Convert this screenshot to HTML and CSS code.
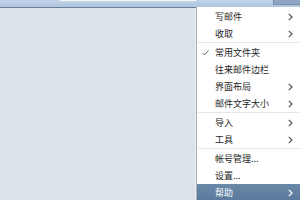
FILE: index.html
```html
<!DOCTYPE html>
<html>
<head>
<meta charset="utf-8">
<link rel="stylesheet" href="styles.css">
</head>
<body>
<div class="page">
  <div class="topbar">
    <div class="search"></div>
    <div class="btn"></div>
  </div>
  <div class="content">
    <div class="main"></div>
    <div class="menu">
      <div class="item"><span class="label">写邮件</span><svg class="arrow" width="5" height="8" viewBox="0 0 5 8"><polyline points="0.8,0.8 4,4 0.8,7.2" fill="none" stroke="currentColor" stroke-width="1.2"/></svg></div>
      <div class="item"><span class="label">收取</span><svg class="arrow" width="5" height="8" viewBox="0 0 5 8"><polyline points="0.8,0.8 4,4 0.8,7.2" fill="none" stroke="currentColor" stroke-width="1.2"/></svg></div>
      <div class="sep"></div>
      <div class="item"><svg class="check" width="7" height="6" viewBox="0 0 7 6"><polyline points="0.5,3 2.5,5 6.5,0.5" fill="none" stroke="currentColor" stroke-width="1"/></svg><span class="label">常用文件夹</span></div>
      <div class="item"><span class="label">往来邮件边栏</span></div>
      <div class="item"><span class="label">界面布局</span><svg class="arrow" width="5" height="8" viewBox="0 0 5 8"><polyline points="0.8,0.8 4,4 0.8,7.2" fill="none" stroke="currentColor" stroke-width="1.2"/></svg></div>
      <div class="item"><span class="label">邮件文字大小</span><svg class="arrow" width="5" height="8" viewBox="0 0 5 8"><polyline points="0.8,0.8 4,4 0.8,7.2" fill="none" stroke="currentColor" stroke-width="1.2"/></svg></div>
      <div class="sep"></div>
      <div class="item"><span class="label">导入</span><svg class="arrow" width="5" height="8" viewBox="0 0 5 8"><polyline points="0.8,0.8 4,4 0.8,7.2" fill="none" stroke="currentColor" stroke-width="1.2"/></svg></div>
      <div class="item"><span class="label">工具</span><svg class="arrow" width="5" height="8" viewBox="0 0 5 8"><polyline points="0.8,0.8 4,4 0.8,7.2" fill="none" stroke="currentColor" stroke-width="1.2"/></svg></div>
      <div class="sep"></div>
      <div class="item"><span class="label">帐号管理...</span></div>
      <div class="item"><span class="label">设置...</span></div>
      <div class="item active"><span class="label">帮助</span><svg class="arrow" width="5" height="8" viewBox="0 0 5 8"><polyline points="0.8,0.8 4,4 0.8,7.2" fill="none" stroke="currentColor" stroke-width="1.2"/></svg></div>
    </div>
  </div>
</div>
</body>
</html>
```
FILE: styles.css
```css
html, body {
  margin: 0;
  padding: 0;
}
body {
  width: 300px;
  height: 200px;
  overflow: hidden;
  background: #dce2e9;
  font-family: "Noto Sans CJK SC", "Noto Sans", sans-serif;
}
.page {
  display: flex;
  flex-direction: column;
  height: 200px;
}
.topbar {
  height: 7px;
  background: linear-gradient(#c3d5e9, #aec5de);
  display: flex;
  align-items: flex-start;
  flex: none;
}
.search {
  margin-left: 60px;
  width: 136px;
  height: 1px;
  background: #f4f7fa;
  border-bottom: 1px solid #c9d3de;
}
.btn {
  margin-left: auto;
  width: 26px;
  height: 4px;
  background: #8ea6c1;
  border: 1px solid #7790ad;
  border-top: none;
  border-right: none;
}
.content {
  flex: 1;
  display: flex;
  min-height: 0;
}
.main {
  flex: 1;
  border-top: 1px solid #6a8198;
  box-shadow: inset -1px 0 0 #eef1f4;
}
.menu {
  width: 103px;
  background: #fff;
  border-left: 1px solid #a7b0ba;
  display: flex;
  flex-direction: column;
  padding-top: 1px;
  color: #1e1e1e;
  font-size: 9px;
}
.item {
  position: relative;
  height: 17px;
  display: flex;
  align-items: center;
  padding-left: 18px;
  padding-right: 7px;
  flex: none;
}
.label {
  flex: 1;
  line-height: 12px;
}
.arrow {
  color: #555;
  flex: none;
}
.check {
  position: absolute;
  left: 5px;
  top: 6px;
  color: #666;
}
.sep {
  height: 2px;
  flex: none;
  display: flex;
  align-items: flex-start;
}
.sep::before {
  content: "";
  display: block;
  width: 100%;
  height: 1px;
  background: #e3e6ea;
}
.item.active {
  background: linear-gradient(#6a88a8, #5b7a9b);
  color: #fff;
}
.item.active .arrow {
  color: #fff;
}
```
